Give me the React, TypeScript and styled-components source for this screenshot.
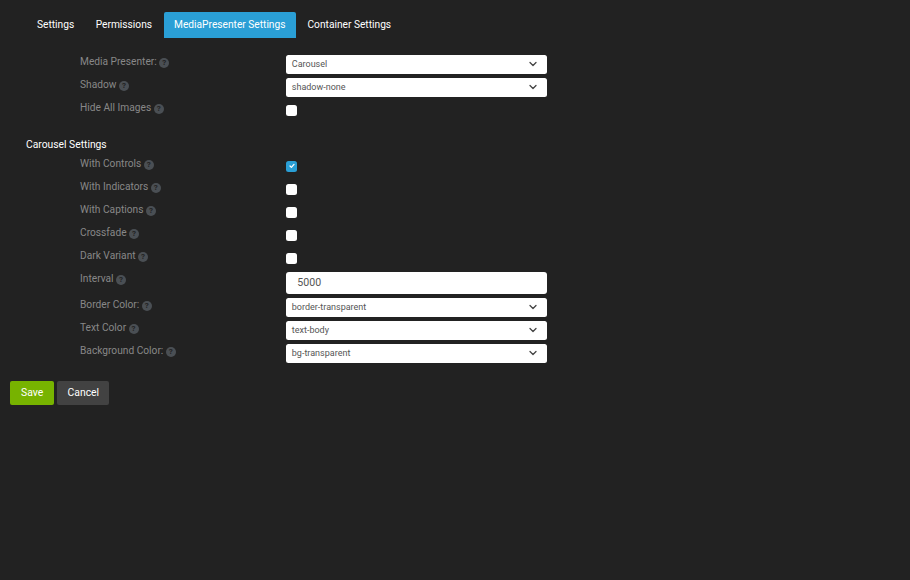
import React from 'react';
import styled, { createGlobalStyle } from 'styled-components';

const GlobalStyle = createGlobalStyle`
  html, body {
    margin: 0;
    padding: 0;
    background-color: #222222;
    font-family: Roboto, "Liberation Sans", sans-serif;
  }
`;

const Page = styled.div`
  width: 910px;
  height: 580px;
  box-sizing: border-box;
  padding: 12px 10px 0;
  overflow: hidden;
  background-color: #222222;
`;

const Tabs = styled.div`
  display: flex;
  gap: 1.5px;
  padding-left: 17px;
  margin-bottom: 17px;
`;

const Tab = styled.div<{ $active?: boolean }>`
  height: 26px;
  line-height: 25px;
  padding: 0 ${(p) => (p.$active ? 10.5 : 10)}px;
  border-radius: 2px 2px 0 0;
  font-size: 10.2px;
  color: #ffffff;
  background-color: ${(p) => (p.$active ? '#2a9fd6' : 'transparent')};
`;

const Row = styled.div<{ $tall?: boolean }>`
  display: grid;
  grid-template-columns: 206.3px 261px;
  padding-left: 70px;
  height: ${(p) => (p.$tall ? 26 : 23)}px;
`;

const Label = styled.div`
  display: flex;
  align-items: center;
  gap: 2.5px;
  height: 14px;
  font-size: 10.2px;
  line-height: 14px;
  color: #888888;
`;

const Help = styled.span`
  display: inline-flex;
  align-items: center;
  justify-content: center;
  width: 10px;
  height: 10px;
  margin-top: 2px;
  border-radius: 50%;
  background-color: #4a4f54;
  color: #222222;
  font-size: 8px;
  font-weight: 700;
  line-height: 10px;
`;

const SelectBox = styled.div`
  display: flex;
  align-items: center;
  justify-content: space-between;
  box-sizing: border-box;
  height: 18.5px;
  padding: 0 10.5px 0 5.5px;
  border-radius: 2.5px;
  background-color: #ffffff;
  font-size: 9px;
  color: #555555;
`;

const InputBox = styled.div`
  box-sizing: border-box;
  height: 22.6px;
  line-height: 22.6px;
  margin-top: -0.5px;
  padding-left: 11px;
  border-radius: 3px;
  background-color: #ffffff;
  font-size: 10.6px;
  color: #555555;
`;

const CheckCell = styled.div`
  padding-top: 4px;
`;

const CheckBox = styled.div<{ $checked?: boolean }>`
  display: flex;
  align-items: center;
  justify-content: center;
  width: 10.5px;
  height: 10.5px;
  border-radius: 2.5px;
  background-color: ${(p) => (p.$checked ? '#2a9fd6' : '#ffffff')};
`;

const SectionTitle = styled.div`
  height: 14px;
  margin: 14px 0 5px;
  padding-left: 16px;
  font-size: 10.3px;
  line-height: 14px;
  color: #ffffff;
`;

const Buttons = styled.div`
  display: flex;
  gap: 3px;
  margin-top: 14px;
`;

const Button = styled.div<{ $variant: 'save' | 'cancel' }>`
  height: 24px;
  line-height: 24px;
  padding: 0 ${(p) => (p.$variant === 'save' ? 11 : 10.25)}px;
  border-radius: 2px;
  font-size: 10.4px;
  text-align: center;
  color: #ffffff;
  background-color: ${(p) => (p.$variant === 'save' ? '#77b300' : '#424242')};
`;

function Chevron() {
  return (
    <svg width="8" height="6" viewBox="0 0 16 12" fill="none">
      <path d="M2 3l6 6 6-6" stroke="#444444" strokeWidth="2.6" strokeLinecap="round" strokeLinejoin="round" />
    </svg>
  );
}

function Tick() {
  return (
    <svg width="8" height="8" viewBox="0 0 20 20" fill="none">
      <path d="M5 10l3.5 3.5L15 6" stroke="#ffffff" strokeWidth="3.2" strokeLinecap="round" strokeLinejoin="round" />
    </svg>
  );
}

interface IFieldProps {
  label: string;
  value?: string;
  checked?: boolean;
  kind: 'select' | 'check' | 'input';
}

function Field({ label, value, checked, kind }: IFieldProps) {
  return (
    <Row $tall={kind === 'input'}>
      <Label>
        {label}
        <Help>?</Help>
      </Label>
      {kind === 'select' && (
        <SelectBox>
          {value}
          <Chevron />
        </SelectBox>
      )}
      {kind === 'input' && <InputBox>{value}</InputBox>}
      {kind === 'check' && (
        <CheckCell>
          <CheckBox $checked={checked}>{checked && <Tick />}</CheckBox>
        </CheckCell>
      )}
    </Row>
  );
}

export default function App() {
  return (
    <>
      <GlobalStyle />
      <Page>
        <Tabs>
          <Tab>Settings</Tab>
          <Tab>Permissions</Tab>
          <Tab $active>MediaPresenter Settings</Tab>
          <Tab>Container Settings</Tab>
        </Tabs>
        <Field kind="select" label="Media Presenter:" value="Carousel" />
        <Field kind="select" label="Shadow" value="shadow-none" />
        <Field kind="check" label="Hide All Images" />
        <SectionTitle>Carousel Settings</SectionTitle>
        <Field kind="check" label="With Controls" checked />
        <Field kind="check" label="With Indicators" />
        <Field kind="check" label="With Captions" />
        <Field kind="check" label="Crossfade" />
        <Field kind="check" label="Dark Variant" />
        <Field kind="input" label="Interval" value="5000" />
        <Field kind="select" label="Border Color:" value="border-transparent" />
        <Field kind="select" label="Text Color" value="text-body" />
        <Field kind="select" label="Background Color:" value="bg-transparent" />
        <Buttons>
          <Button $variant="save">Save</Button>
          <Button $variant="cancel">Cancel</Button>
        </Buttons>
      </Page>
    </>
  );
}
